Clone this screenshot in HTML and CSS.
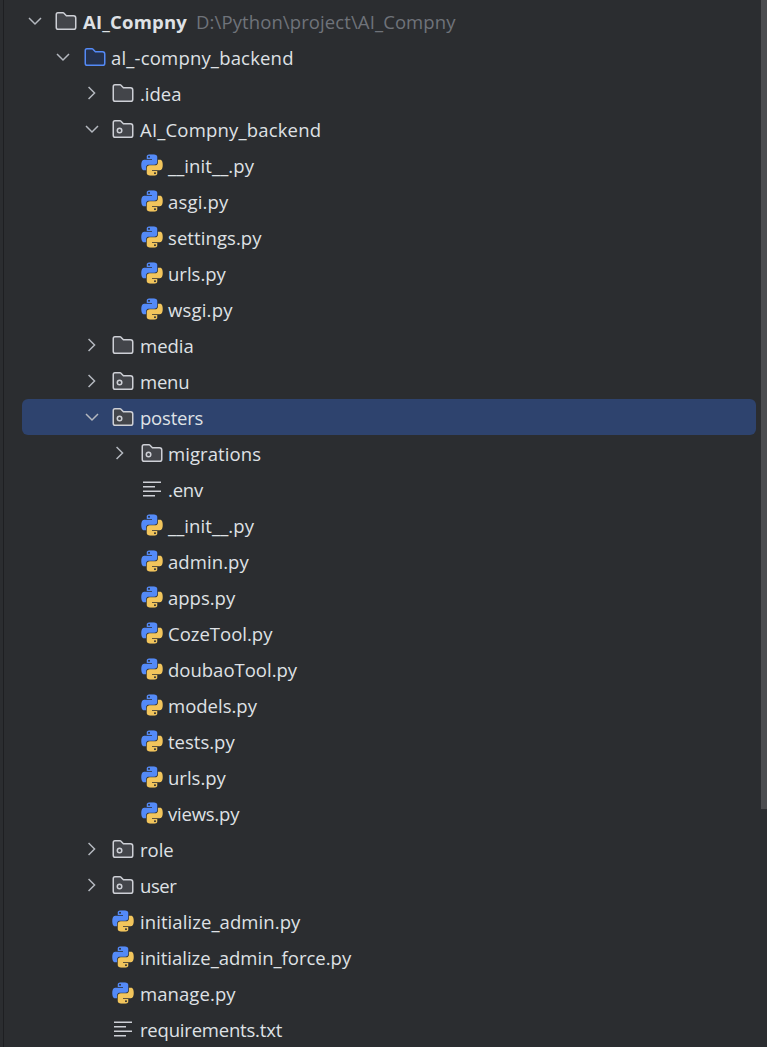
FILE: index.html
```html
<!DOCTYPE html>
<html lang="en">
<head>
<meta charset="utf-8">
<title>Project</title>
<link rel="stylesheet" href="styles.css">
</head>
<body>
<svg class="defs" aria-hidden="true">
  <symbol id="down" viewBox="0 0 16 16"><path d="M4 6l4 4 4-4" fill="none" stroke="#b4b8bf"/></symbol>
  <symbol id="right" viewBox="0 0 16 16"><path d="M5.7 4l4 4-4 4" fill="none" stroke="#b4b8bf"/></symbol>
  <symbol id="folder" viewBox="0 0 16 16"><path d="M8.1 4.35l.15.15H13A1.5 1.5 0 0 1 14.5 6v6.13c0 .82-.57 1.37-1.13 1.37H2.63c-.56 0-1.13-.55-1.13-1.37V3.87c0-.82.57-1.37 1.13-1.37h3.49c.14 0 .27.06.36.15z"/></symbol>
  <symbol id="package" viewBox="0 0 16 16"><use href="#folder"/><circle cx="5.7" cy="9" r="1.5"/></symbol>
  <symbol id="text" viewBox="0 0 16 16"><path d="M2 3.5h12M2 6.5h8M2 9.5h12M2 12.5h8" fill="none" stroke="#ced0d6"/></symbol>
  <symbol id="snake" viewBox="0 0 24 24"><path d="M14.25.18l.9.2.73.26.59.3.45.32.34.34.25.34.16.33.1.3.04.26.02.2-.01.13V8.5l-.05.63-.13.55-.21.46-.26.38-.3.31-.33.25-.35.19-.35.14-.33.1-.3.07-.26.04-.21.02H8.77l-.69.05-.59.14-.5.22-.41.27-.33.32-.27.35-.2.36-.15.37-.1.35-.07.32-.04.27-.02.21v3.06H3.17l-.21-.03-.28-.07-.32-.12-.35-.18-.36-.26-.36-.36-.35-.46-.32-.59-.28-.73-.21-.88-.14-1.05-.05-1.23.06-1.22.16-1.04.24-.87.32-.71.36-.57.4-.44.42-.33.42-.24.4-.16.36-.1.32-.05.24-.01h.16l.06.01h8.16v-.83H6.18l-.01-2.75-.02-.37.05-.34.11-.31.17-.28.25-.26.31-.23.38-.2.44-.18.51-.15.58-.12.64-.1.71-.06.77-.04.84-.02 1.27.05zm-6.3 1.98l-.23.33-.08.41.08.41.23.34.33.22.41.09.41-.09.33-.22.23-.34.08-.41-.08-.41-.23-.33-.33-.22-.41-.09-.41.09z"/></symbol>
  <symbol id="python" viewBox="-1.3 -1.3 26.6 26.6"><use href="#snake" width="24" height="24" fill="#548af7"/><use href="#snake" width="24" height="24" fill="#f2c55c" transform="rotate(180 12 12)"/></symbol>
</svg>
<main class="panel">
<div class="tree">
  <div class="row l0"><svg class="arrow"><use href="#down"/></svg><svg class="icon"><use href="#folder"/></svg><span class="name root">AI_Compny</span><span class="name path">D:\Python\project\AI_Compny</span></div>
  <div class="row l1"><svg class="arrow"><use href="#down"/></svg><svg class="icon module"><use href="#folder"/></svg><span class="name wider">al_-compny_backend</span></div>
  <div class="row l2"><svg class="arrow"><use href="#right"/></svg><svg class="icon"><use href="#folder"/></svg><span class="name">.idea</span></div>
  <div class="row l2"><svg class="arrow"><use href="#down"/></svg><svg class="icon"><use href="#package"/></svg><span class="name wider">AI_Compny_backend</span></div>
  <div class="row l3"><span class="arrow"></span><svg class="icon"><use href="#python"/></svg><span class="name wide">__init__.py</span></div>
  <div class="row l3"><span class="arrow"></span><svg class="icon"><use href="#python"/></svg><span class="name wider">asgi.py</span></div>
  <div class="row l3"><span class="arrow"></span><svg class="icon"><use href="#python"/></svg><span class="name wide">settings.py</span></div>
  <div class="row l3"><span class="arrow"></span><svg class="icon"><use href="#python"/></svg><span class="name">urls.py</span></div>
  <div class="row l3"><span class="arrow"></span><svg class="icon"><use href="#python"/></svg><span class="name wider">wsgi.py</span></div>
  <div class="row l2"><svg class="arrow"><use href="#right"/></svg><svg class="icon"><use href="#folder"/></svg><span class="name">media</span></div>
  <div class="row l2"><svg class="arrow"><use href="#right"/></svg><svg class="icon"><use href="#package"/></svg><span class="name tight">menu</span></div>
  <div class="row l2 selected"><svg class="arrow"><use href="#down"/></svg><svg class="icon"><use href="#package"/></svg><span class="name tight">posters</span></div>
  <div class="row l3"><svg class="arrow"><use href="#right"/></svg><svg class="icon"><use href="#package"/></svg><span class="name wide">migrations</span></div>
  <div class="row l3"><span class="arrow"></span><svg class="icon"><use href="#text"/></svg><span class="name tight">.env</span></div>
  <div class="row l3"><span class="arrow"></span><svg class="icon"><use href="#python"/></svg><span class="name wide">__init__.py</span></div>
  <div class="row l3"><span class="arrow"></span><svg class="icon"><use href="#python"/></svg><span class="name wide">admin.py</span></div>
  <div class="row l3"><span class="arrow"></span><svg class="icon"><use href="#python"/></svg><span class="name">apps.py</span></div>
  <div class="row l3"><span class="arrow"></span><svg class="icon"><use href="#python"/></svg><span class="name">CozeTool.py</span></div>
  <div class="row l3"><span class="arrow"></span><svg class="icon"><use href="#python"/></svg><span class="name">doubaoTool.py</span></div>
  <div class="row l3"><span class="arrow"></span><svg class="icon"><use href="#python"/></svg><span class="name">models.py</span></div>
  <div class="row l3"><span class="arrow"></span><svg class="icon"><use href="#python"/></svg><span class="name">tests.py</span></div>
  <div class="row l3"><span class="arrow"></span><svg class="icon"><use href="#python"/></svg><span class="name">urls.py</span></div>
  <div class="row l3"><span class="arrow"></span><svg class="icon"><use href="#python"/></svg><span class="name tight">views.py</span></div>
  <div class="row l2"><svg class="arrow"><use href="#right"/></svg><svg class="icon"><use href="#package"/></svg><span class="name">role</span></div>
  <div class="row l2"><svg class="arrow"><use href="#right"/></svg><svg class="icon"><use href="#package"/></svg><span class="name tighter">user</span></div>
  <div class="row l2"><span class="arrow"></span><svg class="icon"><use href="#python"/></svg><span class="name wide">initialize_admin.py</span></div>
  <div class="row l2"><span class="arrow"></span><svg class="icon"><use href="#python"/></svg><span class="name">initialize_admin_force.py</span></div>
  <div class="row l2"><span class="arrow"></span><svg class="icon"><use href="#python"/></svg><span class="name wide">manage.py</span></div>
  <div class="row l2"><span class="arrow"></span><svg class="icon"><use href="#text"/></svg><span class="name tight">requirements.txt</span></div>
</div>
<div class="scrollbar"></div>
</main>
</body>
</html>
```
FILE: styles.css
```css
* { box-sizing: border-box; }
body { margin: 0; background: #2b2d30; overflow: hidden; }
.defs { position: absolute; width: 0; height: 0; }
.panel {
  display: flex;
  justify-content: space-between;
  height: 1047px;
  margin-left: 3px;
  border-left: 1px solid #1e1f22;
  overflow: hidden;
}
.tree { width: 734px; margin-left: 18px; padding-top: 3px; }
.row {
  display: flex;
  align-items: center;
  height: 36px;
  border-radius: 6px;
  color: #dfe1e5;
  font: 18.5px/36px "Open Sans", "Noto Sans", sans-serif;
  white-space: pre;
}
.selected { background: #2e436e; }
.l0 { padding-left: 1px; }
.l1 { padding-left: 29px; }
.l2 { padding-left: 58px; }
.l3 { padding-left: 86px; }
.arrow { flex: none; width: 24px; height: 24px; }
.icon { flex: none; width: 24px; height: 24px; margin-left: 7px; fill: #43454a; stroke: #ced0d6; }
.l1 .icon, .l3 .icon { margin-left: 8px; }
.icon:has([href="#python"]) { stroke: none; }
.icon.module { fill: #25324d; stroke: #548af7; }
.name { margin: 2px 0 0 4px; }
.l0 .name, .l2 .name { margin-left: 5px; }
.wide { letter-spacing: 0.08px; }
.wider { letter-spacing: 0.18px; }
.tight { letter-spacing: -0.2px; }
.tighter { letter-spacing: -0.45px; }
.root { font-weight: 700; letter-spacing: 0.2px; }
.l0 .path { margin-left: 9px; color: #6f737a; letter-spacing: 0.1px; }
.scrollbar { width: 6px; height: 809px; background: #4b4c4f; }
```
